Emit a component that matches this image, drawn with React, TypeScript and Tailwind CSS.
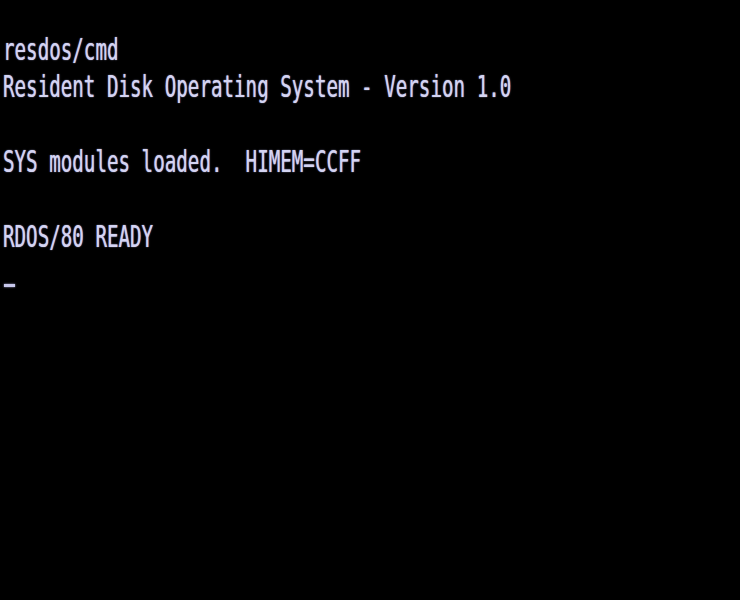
const lines: string[] = [
  '',
  'resdos/cmd',
  'Resident Disk Operating System - Version 1.0',
  '',
  'SYS modules loaded.  HIMEM=CCFF',
  '',
  'RDOS/80 READY',
];

export default function App() {
  return (
    <div className="w-[740px] h-[600px] bg-black overflow-hidden text-[#d4d4f2] font-['DejaVu_Sans_Mono','Liberation_Mono',monospace] [text-shadow:0_0_1px_#b8b8e8]">
      {/* screen rows, 37.5px each like a 64x16 display */}
      <div className="flex flex-col">
        {lines.map((line, i) => (
          <div key={i} className="h-[37.5px] pl-[3px] overflow-visible">
            <span className="block whitespace-pre text-[19.2px] leading-none origin-top scale-y-[1.57] -translate-y-[3px]">
              {line}
            </span>
          </div>
        ))}
        {/* cursor */}
        <div className="h-[37.5px] pt-[21px]">
          <div className="ml-[4px] w-[11px] h-[3px] bg-[#c8c8ec] shadow-[0_0_2px_#b8b8e8]" />
        </div>
      </div>
    </div>
  );
}
